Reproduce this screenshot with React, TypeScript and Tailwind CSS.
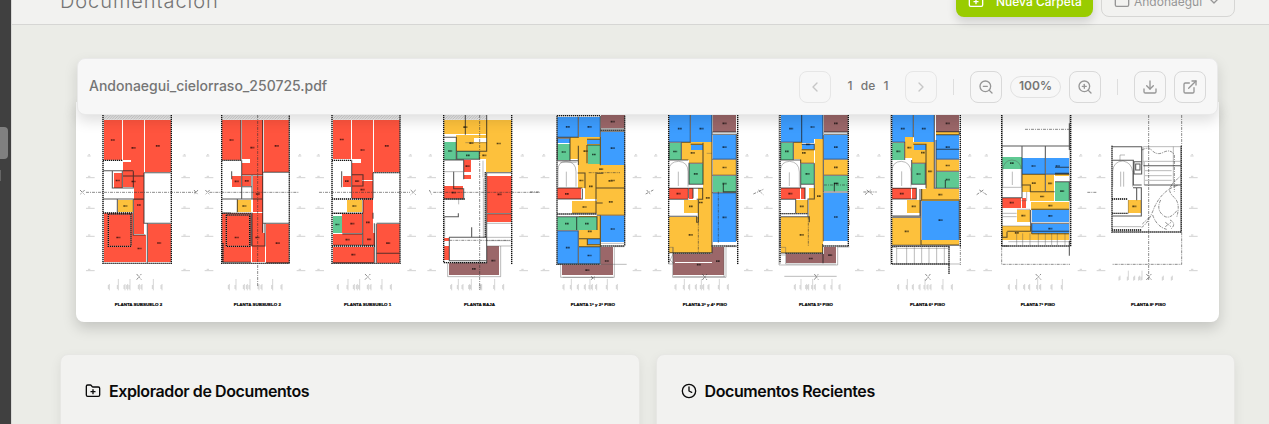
import React from "react";
import {
  ChevronDown,
  ChevronLeft,
  ChevronRight,
  Clock,
  Download,
  ExternalLink,
  Folder,
  FolderPlus,
  ZoomIn,
  ZoomOut,
} from "lucide-react";

type Room = [string, number, number, number, number];

interface Plan {
  origin: number;
  label: string;
  labelX: number;
  labelW: number;
  rooms: Room[];
  // solid partition walls
  walls: string;
  // dashed perimeter walls
  outer: string;
  // thin grey construction lines
  thin?: string;
  // section axis, drawn with dash-dots
  axis?: string;
  hatch?: [number, number];
  ticks: number[];
  ticksY?: number;
  sides: [number, number];
}

const FILL: Record<string, string> = {
  r: "#ff543e",
  y: "#fdc13c",
  b: "#3d9dff",
  g: "#5fc993",
  m: "#9b6769",
  w: "#ffffff",
};

const PLANS: Plan[] = [
  {
    origin: 76, label: "PLANTA SUBSUELO 2", labelX: 116, labelW: 143,
    hatch: [83, 202],
    rooms: [
      ["r", 83, 30, 55, 120], ["r", 141, 30, 63, 167], ["r", 207, 30, 77, 155], ["w", 141, 150, 24, 7],
      ["r", 113, 190, 24, 43], ["r", 141, 197, 63, 35], ["r", 174, 197, 30, 176], ["y", 125, 269, 46, 38],
      ["r", 83, 309, 88, 147], ["r", 171, 375, 39, 81], ["r", 215, 341, 69, 116],
    ],
    walls: "M81 182H172M109 184V234H172V184M141 198H204M81 267H204M124 268V308M172 267V375H208M204 188H284M204 188V340H284M214 341V458M139 184V234M172 268H204",
    outer: "M81 15V460H286V15M81 151H141M81 309H171M97 312V409H165V312H97",
    axis: "M30 247H360M12 240L26 254M26 240L12 254M354 240L366 254M366 240L354 254M182 509L196 492M182 492L196 509",
    ticks: [100, 127, 147, 155, 162, 190, 198, 232, 258], sides: [40, 326],
  },
  {
    origin: 76, label: "PLANTA SUBSUELO 2", labelX: 473, labelW: 142,
    hatch: [439, 202],
    rooms: [
      ["r", 439, 30, 55, 120], ["r", 498, 30, 62, 166], ["r", 564, 30, 76, 155], ["w", 499, 148, 24, 10],
      ["r", 468, 197, 28, 34], ["r", 499, 197, 27, 31], ["r", 530, 197, 31, 110], ["y", 484, 269, 42, 38],
      ["r", 439, 309, 86, 147], ["r", 527, 309, 34, 147], ["r", 560, 370, 7, 86], ["r", 570, 341, 70, 117],
    ],
    walls: "M495 30V151M497 151V267M497 195H560M467 184V208M497 230H528M528 197V267M438 267H560M560 30V368M561 187H640M561 340H640M528 308V408H567V341M525 312V408M439 309H465M439 457H525M570 458H640M484 268V307",
    outer: "M437 15V460H640V15M437 151H495M439 310H526M451 315V409H521V315H451M441 400V456",
    axis: "M400 247H670M388 240L401 254M401 240L388 254M545 15V530",
    ticks: [460, 480, 505, 514, 522, 549, 558, 590, 618], sides: [396, 672],
  },
  {
    origin: 310, label: "PLANTA SUBSUELO 1", labelX: 102, labelW: 142,
    hatch: [68, 202],
    rooms: [
      ["r", 68, 30, 55, 117], ["r", 126, 30, 63, 180], ["r", 192, 30, 77, 155], ["w", 124, 147, 28, 12],
      ["r", 99, 197, 24, 33], ["r", 126, 197, 31, 33], ["r", 126, 212, 63, 54], ["y", 110, 269, 46, 38],
      ["r", 159, 267, 30, 140], ["g", 69, 317, 26, 53], ["r", 97, 312, 60, 58], ["r", 68, 373, 89, 32],
      ["r", 160, 370, 35, 36], ["r", 68, 410, 124, 48], ["r", 200, 341, 69, 117],
    ],
    walls: "M125 150V265M95 184V232M125 194H159V228H126M189 188V265M126 266H189M159 270V308M158 310V405M69 310H158V371H97M69 406H195M97 372H158M189 308V326M193 340V458M199 341V458M200 340H269M200 430H269M68 458H192",
    outer: "M66 15V460H270V15M66 151H125M66 267H190M66 310H158M190 188H270M66 408H195",
    axis: "M27 247H300M302 240L317 254M317 240L302 254M165 509L181 492M165 492L181 509",
    ticks: [85, 114, 133, 142, 149, 175, 183, 216, 244], sides: [26, 302],
  },
  {
    origin: 310, label: "PLANTA BAJA", labelX: 462, labelW: 93,
    hatch: [403, 125],
    rooms: [
      ["y", 402, 30, 128, 43], ["y", 438, 76, 92, 47], ["y", 527, 15, 78, 171], ["y", 508, 124, 30, 24],
      ["w", 402, 82, 37, 14], ["w", 493, 84, 37, 12], ["g", 402, 97, 37, 52], ["g", 440, 124, 68, 24],
      ["r", 462, 151, 21, 35], ["r", 462, 196, 21, 12], ["r", 402, 229, 58, 38], ["r", 532, 197, 73, 112],
      ["r", 532, 313, 73, 23], ["r", 401, 384, 17, 8], ["r", 401, 409, 17, 42],
      ["m", 532, 409, 36, 86], ["m", 416, 458, 152, 37], ["w", 527, 15, 78, 14],
    ],
    walls: "M402 82H439V149M466 15V74M530 15V124H440V148H508V124M402 150H462M461 151V208M431 185V236H461V267H402M526 188H605M530 188V380M532 311H605M403 320H445V310M417 382H530V452H418V382M430 458H530V408M485 352V382",
    outer: "M401 15V458H418M605 15V463M526 187V382M402 458H530M401 267H465",
    thin: "M413 458V500H572V408M520 205V384M530 382H605V408H530M530 392H605M446 268V283M530 340H605M519 202V152M402 185H460M404 320V382M466 98H530",
    axis: "M370 247H690M509 15V540M358 240L365 254M418 391H600",
    ticks: [425, 445, 459, 479, 484, 511, 515, 554, 581], sides: [362, 638],
  },
  {
    origin: 530, label: "PLANTA 1° y 2° PISO", labelX: 122, labelW: 133,
    rooms: [
      ["b", 82, 20, 63, 61], ["b", 147, 20, 63, 61], ["m", 212, 15, 72, 40], ["b", 212, 65, 72, 99],
      ["y", 121, 82, 91, 83], ["b", 82, 86, 38, 14], ["g", 82, 101, 38, 50], ["b", 172, 89, 39, 14], ["g", 174, 106, 36, 55],
      ["w", 120, 147, 25, 20], ["y", 143, 165, 141, 25], ["y", 212, 188, 72, 47], ["y", 199, 190, 85, 45], ["y", 143, 190, 22, 43], ["y", 166, 190, 34, 78], ["y", 201, 235, 83, 81],
      ["r", 82, 235, 58, 33], ["r", 142, 235, 12, 33], ["w", 155, 234, 11, 35], ["y", 126, 272, 75, 38],
      ["y", 147, 318, 65, 92], ["g", 82, 321, 58, 40], ["g", 142, 321, 58, 40],
      ["b", 82, 364, 63, 98], ["b", 147, 411, 63, 51], ["b", 173, 387, 38, 16], ["b", 212, 317, 72, 80],
      ["m", 212, 410, 37, 86], ["m", 95, 465, 154, 31],
    ],
    walls: "M145 20V82H82V150M82 85H120V152M211 18V166M171 105V160M171 105H211M171 88H211V103M212 57H284M212 64H284M145 107V165M82 152H145M143 189H165V235M82 234H157M198 190V310H126M200 190H220M199 234H284M200 279H218M200 316H284V164M82 320H201V360M140 320V360M82 362H145V462M147 386H211V462H82M147 410H211M211 317V409M172 386V404H211M82 267H157V236",
    outer: "M81 17V463H211M284 17V408M81 17H210M82 312H200M212 408H284M212 61H284",
    thin: "M92 463V502H253V410H284M98 502H250M84 230V180Q84 155 108 154Q138 155 138 185V230M91 157H140M109 185V230M210 463H290M212 400H284",
    axis: "M183 509L196 499M183 499L196 509M176 188H270M0 246H30",
    ticks: [102, 124, 145, 166, 180, 187, 200, 232, 262], sides: [42, 318],
  },
  {
    origin: 530, label: "PLANTA 3° y 4° PISO", labelX: 458, labelW: 133,
    rooms: [
      ["b", 418, 15, 63, 82], ["b", 483, 15, 63, 82], ["y", 457, 97, 62, 63], ["y", 520, 97, 27, 333], ["b", 482, 104, 37, 15],
      ["g", 417, 98, 37, 53], ["w", 454, 151, 22, 10], ["g", 477, 161, 41, 61], ["m", 548, 15, 71, 50], ["b", 548, 75, 71, 73],
      ["y", 548, 149, 71, 47], ["g", 548, 197, 71, 48], ["b", 548, 249, 71, 146],
      ["r", 417, 235, 57, 32], ["r", 477, 235, 12, 32], ["y", 503, 235, 20, 85], ["y", 462, 270, 42, 38], ["y", 417, 321, 130, 107],
      ["w", 491, 235, 11, 35], ["m", 545, 411, 38, 85], ["m", 430, 432, 153, 64], ["w", 435, 456, 110, 4],
    ],
    walls: "M481 15V97H417V150H475M454 98V150M546 15V248H619M482 103H519V160H477V223H519V160M519 98V120M548 66H619M548 73H619V393M417 235H518V268H500M417 268H475M417 319H500V337H505V270M546 249V428H418M580 222V245H619M548 196H619M548 148H619M475 235V265M489 235V265",
    outer: "M416 15V460M623 15V463M430 430H545M545 408H619",
    thin: "M428 412V502H588V410H620M430 500H585M417 230V180Q418 155 446 154Q474 156 474 185V230M445 185V228M416 412H430V462H416ZM416 460L430 430M416 445L430 460M582 411V500M530 130H546",
    axis: "M505 320V428M347 252L370 240M350 240L362 254M517 510L531 492M517 492L531 510M565 245V400",
    ticks: [438, 463, 479, 499, 514, 521, 537, 568, 595], sides: [378, 652],
  },
  {
    origin: 750, label: "PLANTA 5° PISO", labelX: 147, labelW: 102,
    rooms: [
      ["b", 92, 15, 63, 82], ["b", 157, 15, 61, 72], ["y", 131, 97, 62, 63], ["b", 156, 88, 37, 30], ["w", 156, 99, 37, 4],
      ["y", 194, 88, 26, 341], ["g", 92, 98, 38, 52], ["w", 131, 146, 20, 15], ["g", 152, 161, 41, 61], ["m", 222, 15, 72, 50],
      ["b", 222, 75, 72, 73], ["y", 222, 149, 72, 46], ["g", 222, 197, 72, 47], ["b", 222, 249, 72, 144],
      ["r", 92, 234, 58, 34], ["r", 152, 234, 13, 34], ["y", 176, 235, 19, 193], ["y", 137, 270, 37, 38], ["y", 92, 321, 126, 107],
      ["m", 107, 431, 151, 29], ["m", 222, 411, 37, 49],
    ],
    walls: "M155 15V97H92V150H152V235M130 98V149M219 15V88M155 103H193V119H155M152 160H193M193 160V223M152 223H193V267H174V320H178V337M220 75V246H294M222 66H294V73H222M222 196H294M222 148H294M220 248V394M92 268H137V310M92 320H174M90 320V412M92 429H218V402M253 244V220H266M92 234H165V268M219 431V460",
    outer: "M90 15V460M295 15V408M107 430H218M220 408H296M91 311H175",
    thin: "M87 15V465H263V411H298M107 462H258M91 230V180Q93 155 119 154Q147 156 148 186V230M118 187V228M91 412H107V462M92 435H107M103 499H260M293 290H298V304M298 330V345H293",
    axis: "M10 252L40 238M25 240L40 254M193 509L205 492M193 492L205 509M175 320V410M222 225H290",
    ticks: [136, 153, 170, 176, 188, 196, 225, 246, 270], sides: [52, 325],
  },
  {
    origin: 750, label: "PLANTA 6° PISO", labelX: 480, labelW: 105,
    rooms: [
      ["b", 427, 15, 63, 82], ["b", 491, 15, 61, 82], ["y", 466, 82, 24, 62], ["y", 485, 97, 68, 62], ["b", 491, 104, 36, 15],
      ["g", 427, 98, 36, 52], ["g", 485, 161, 41, 62], ["y", 528, 98, 25, 172], ["m", 558, 15, 70, 50], ["y", 558, 65, 70, 9],
      ["b", 558, 75, 70, 73], ["y", 558, 149, 70, 35], ["g", 558, 185, 70, 48], ["y", 514, 236, 114, 36],
      ["r", 427, 235, 57, 32], ["r", 485, 235, 14, 32], ["y", 472, 270, 38, 38], ["b", 515, 272, 113, 117],
      ["y", 427, 323, 86, 82], ["y", 513, 390, 115, 16],
    ],
    walls: "M490 15V82M427 97H464V150M485 150V223H526V160H486M490 103H528V235M553 15V235H628M558 65H628V74H558M558 118H628M558 148H628M558 184H628M427 235H499V267H427M510 237V318H427M515 237V270H628V389M427 322H513V405H628M558 90V233M586 210V233M427 406H628M513 270V390",
    outer: "M425 15V463M631 15V410M427 409H600M427 462H600M597 410V492",
    thin: "M422 15V465M426 230V180Q428 155 454 154Q481 156 483 186V230M455 184V228M426 412H440V462M440 415H600M470 412V462M493 412V462M515 412V462M537 412V462M560 412V462M583 412V462M440 462H632",
    axis: "M340 246H380M345 254L362 240M350 240L368 254M526 512L541 492M526 492L541 509M631 408V465",
    ticks: [446, 472, 490, 510, 525, 534, 543, 579, 607], sides: [388, 660],
  },
  {
    origin: 970, label: "PLANTA 7° PISO", labelX: 152, labelW: 103,
    rooms: [
      ["g", 97, 142, 58, 35], ["b", 157, 144, 67, 48], ["b", 229, 144, 68, 48], ["y", 157, 193, 69, 53],
      ["y", 229, 194, 23, 52], ["y", 255, 193, 42, 5], ["g", 256, 215, 41, 57], ["y", 181, 247, 71, 25],
      ["y", 184, 275, 114, 24], ["r", 97, 263, 56, 30], ["r", 157, 263, 11, 30], ["y", 141, 299, 38, 36],
      ["b", 185, 299, 112, 37], ["b", 185, 341, 112, 30], ["y", 97, 348, 87, 41], ["y", 97, 370, 201, 20],
    ],
    walls: "M95 108H302M156 108V263H96M226 108V245M156 193H298M157 225H181V245H254M255 172H297M255 215H298V272M255 190H297M182 300V365M184 298H297M185 340H297M112 364H298M185 371H297M298 40V120M298 393V437M96 365V382H111V365M185 340V371M98 408H115",
    outer: "M95 15V410M302 15V410M95 408H300",
    thin: "M97 15V408M299 15V408M96 232H155M97 320H140M97 310H140M97 348H180M141 298H180V335M98 230V182Q100 151 126 150Q153 152 154 181V230M127 185V225M140 370V405M158 370V405M180 370V405M205 370V405M226 370V405M245 370V405M262 370V405M285 370V405M170 245V272H154M115 395H300",
    axis: "M165 58H298M95 412V463H300M20 254L40 240M28 240L50 254M197 509L213 492M197 492L213 509M352 247H382",
    ticks: [118, 140, 164, 179, 203, 212, 246, 277], sides: [50, 333],
  },
  {
    origin: 970, label: "PLANTA 8° PISO", labelX: 483, labelW: 104,
    rooms: [["y", 473, 270, 40, 38]],
    walls: "M426 110H515V155M427 151H490V225H515M490 155H515V192H492V155M497 162H510V180H497ZM520 167H634M523 225H634M489 233H515M500 233V271M514 232V318H427",
    outer: "M426 107V366H634M634 107V367M426 360H515M426 267H473M427 310H475",
    thin: "M632 110V368M523 156V225M428 230V183Q431 154 459 153Q486 158 488 187V230M452 185V230M461 185V230M427 350H514M475 310V270M450 151V135H465M525 182H605M525 197H605M525 211H605M610 110V220M520 110H635M519 165V110M520 154H635",
    axis: "M536 15V510M635 15V107M635 367V463H426M516 120Q536 108 550 125Q563 135 578 128Q602 115 613 135V245M515 352Q535 340 553 292Q577 240 623 226M572 270Q557 300 582 318Q600 330 622 300M606 225Q590 240 610 260Q633 278 620 322M586 337L603 350M586 350L603 337M600 330Q620 340 604 356M517 342L540 320M548 315Q560 350 590 358M605 224L634 195M529 510L544 492M529 492L544 509",
    ticks: [450, 475, 494, 509, 516, 580, 607], ticksY: 490, sides: [390, 667],
  },
];

const SIDE_ROWS = [138, 203, 295, 379, 482];

function roomTags(rooms: Room[]) {
  return rooms
    .filter(([k, , , w, h]) => k !== "w" && w >= 20 && h >= 24)
    .map(([, x, y, w, h]) => `M${x + w / 2 - 6} ${y + h / 2}h12`)
    .join("");
}

function FloorPlan({ plan }: { plan: Plan }) {
  const ty = plan.ticksY ?? 515;
  return (
    <g transform={`translate(${plan.origin - 76} 8) scale(0.33333)`}>
      {plan.hatch && <rect x={plan.hatch[0]} y={14} width={plan.hatch[1]} height={15} fill="url(#hatch)" />}
      <g shapeRendering="crispEdges">
        {plan.rooms.map(([kind, x, y, w, h], i) => (
          <rect key={i} x={x} y={y} width={w} height={h} fill={FILL[kind]} />
        ))}
      </g>
      <g fill="none">
        {plan.thin && <path d={plan.thin} stroke="#555" strokeOpacity={0.5} strokeWidth={2.4} />}
        <path d={plan.walls} stroke="#222" strokeOpacity={0.75} strokeWidth={3.2} />
        <path d={plan.outer} stroke="#8a8a8a" strokeWidth={4} strokeOpacity={0.6} />
        <path d={plan.outer} stroke="#111" strokeWidth={4} strokeDasharray="3 3" />
        {plan.axis && <path d={plan.axis} stroke="#333" strokeOpacity={0.7} strokeWidth={2.4} strokeDasharray="9 3 3 3" />}
        <path d={roomTags(plan.rooms)} stroke="#000" strokeOpacity={0.65} strokeWidth={5} strokeDasharray="5 1 3 1" />
        {plan.sides.map((x) =>
          SIDE_ROWS.map((y) => (
            <path
              key={`${x}-${y}`}
              d={y === 138 ? `M${x - 6} ${y}h10M${x - 3} ${y - 4}h5` : `M${x - 10} ${y}h26M${x - 4} ${y - 4}h7`}
              stroke="#777"
              strokeOpacity={0.45}
              strokeWidth={2.2}
            />
          )),
        )}
        {plan.ticks.map((x, i) => (
          <path
            key={x}
            d={`M${x} ${ty + (i % 3 === 1 ? -8 : 7)}V${ty + (plan.ticksY ? 20 : 26)}M${x - 3} ${ty + 10}v12`}
            stroke="#777"
            strokeOpacity={0.45}
            strokeWidth={2}
          />
        ))}
      </g>
      <text
        x={plan.labelX}
        y={588}
        textLength={plan.labelW}
        lengthAdjust="spacingAndGlyphs"
        fontFamily="Liberation Sans, sans-serif"
        fontSize={13}
        fontWeight={700}
        fill="#000"
        stroke="#000"
        strokeWidth={0.6}
      >
        {plan.label}
      </text>
    </g>
  );
}

function PlanSheet() {
  return (
    <svg className="block h-[220px] w-full" viewBox="0 0 1143 220" role="img" aria-label="Planos de cielorraso">
      <defs>
        <pattern id="hatch" width={8} height={8} patternUnits="userSpaceOnUse">
          <rect width={8} height={8} fill="#efefef" />
          <path d="M-1 9L9 -1" stroke="#bbb" strokeWidth={2} />
        </pattern>
      </defs>
      {PLANS.map((plan, i) => (
        <FloorPlan key={i} plan={plan} />
      ))}
    </svg>
  );
}

function ToolButton({ children, muted }: { children: React.ReactNode; muted?: boolean }) {
  return (
    <button
      className={
        muted
          ? "flex size-8 items-center justify-center rounded-[8px] border border-[#e6e6e6] text-[#c6c6c6]"
          : "flex size-8 items-center justify-center rounded-[8px] border border-[#d9d9d9] text-[#969696]"
      }
    >
      {children}
    </button>
  );
}

function Section({ icon, title }: { icon: React.ReactNode; title: string }) {
  return (
    <section className="h-[120px] flex-1 rounded-lg border border-[#e7e7e4] bg-[#f2f2f0] px-6 pt-6 shadow-[0_4px_12px_rgba(0,0,0,0.07)]">
      <h2 className="flex items-center gap-2 text-base font-semibold tracking-[-0.4px] text-[#0a0a0a]">
        {icon}
        {title}
      </h2>
    </section>
  );
}

export default function App() {
  return (
    <div className="flex h-[424px] w-full overflow-hidden bg-[#ebece7] font-['Inter',sans-serif]">
      <aside className="w-3 shrink-0 border-r border-[#d9d9d7] bg-[#404040] pt-[127px]">
        <div className="h-8 w-2 rounded-r bg-[#808080]" />
        <div className="mt-[11px] h-[11px] w-px bg-[#666]" />
      </aside>
      <div className="min-w-0 flex-1">
        <header className="flex h-[25px] items-end justify-between border-b border-[#d6d6d4] bg-[#f2f2f0] pr-[34px] pb-[7px] pl-[48px]">
          <h1 className="mb-[2px] text-xl leading-7 font-light tracking-[0.93px] text-[#757575]">Documentación</h1>
          <div className="flex items-end gap-2">
            <button className="flex h-8 w-[137px] items-center gap-3 rounded-[8px] bg-[#99cc00] pl-3 text-xs font-medium text-white shadow-[0_5px_10px_rgba(0,0,0,0.14)]">
              <FolderPlus size={16} />
              <span className="pt-px">Nueva Carpeta</span>
            </button>
            <button className="flex h-8 w-[134px] items-center rounded-[8px] border border-[#d6d6d4] pl-3 text-xs text-[#969696]">
              <Folder size={16} />
              <span className="ml-1 pt-px">Andonaegui</span>
              <ChevronDown size={16} className="ml-1" />
            </button>
          </div>
        </header>
        <main className="flex flex-col gap-8 pt-[33px] pr-[34px] pl-[48px]">
          <div className="mr-4 ml-4 h-[264px]">
            <div className="relative z-10 mx-px flex h-[57px] items-center justify-between rounded-lg border border-[#e9e9e9] bg-[#f7f7f7] px-[11px] shadow-[0_6px_14px_rgba(0,0,0,0.13)]">
              <span className="pb-[2px] text-sm font-medium text-[#757575]">Andonaegui_cielorraso_250725.pdf</span>
              <div className="flex items-center">
                <ToolButton muted><ChevronLeft size={16} /></ToolButton>
                <span className="w-[74px] pb-px text-center text-xs font-medium [word-spacing:5px] text-[#757575]">1 de 1</span>
                <ToolButton muted><ChevronRight size={16} /></ToolButton>
                <span className="mx-4 h-4 w-px bg-[#dedede]" />
                <ToolButton><ZoomOut size={16} /></ToolButton>
                <span className="mx-2 flex h-[22px] w-[51px] items-center justify-center rounded-full border border-[#e2e2e2] pb-px text-xs font-semibold text-[#757575]">100%</span>
                <ToolButton><ZoomIn size={16} /></ToolButton>
                <span className="mx-4 h-4 w-px bg-[#dedede]" />
                <ToolButton><Download size={16} /></ToolButton>
                <span className="w-2" />
                <ToolButton><ExternalLink size={16} /></ToolButton>
              </div>
            </div>
            <div className="-mt-[13px] rounded-b-lg bg-white shadow-[0_6px_14px_rgba(0,0,0,0.17)]">
              <PlanSheet />
            </div>
          </div>
          <div className="flex gap-4">
            <Section icon={<FolderPlus size={16} />} title="Explorador de Documentos" />
            <Section icon={<Clock size={16} />} title="Documentos Recientes" />
          </div>
        </main>
      </div>
    </div>
  );
}
